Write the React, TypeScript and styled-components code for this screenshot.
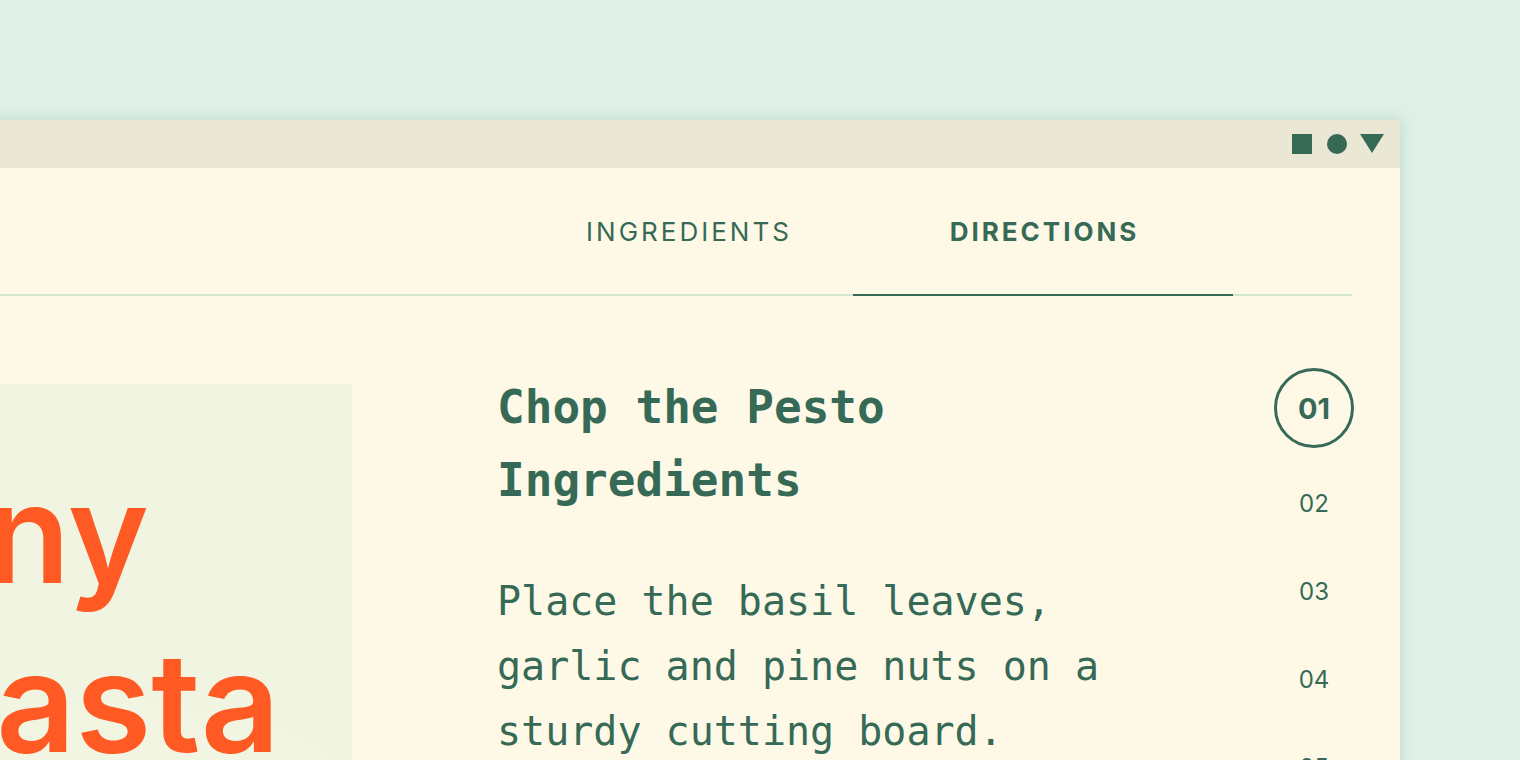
import React from "react";
import styled, { createGlobalStyle } from "styled-components";

const GlobalStyle = createGlobalStyle`
  html, body { margin: 0; padding: 0; height: 100%; overflow: hidden; }
  body { background: #dff1e6; font-family: Inter, "Noto Sans", sans-serif; }
  * { box-sizing: border-box; }
`;

const green = "#366a57";

const Page = styled.div`
  height: 760px;
  overflow: hidden;
  padding: 120px 120px 0 0;
  display: flex;
`;

const Window = styled.div`
  flex: 1;
  margin-left: -480px;
  min-height: 820px;
  background: #fef9e6;
  box-shadow: 0 0 14px rgba(60, 110, 90, 0.2);
  display: flex;
  flex-direction: column;
`;

const TitleBar = styled.div`
  height: 48px;
  flex-shrink: 0;
  background: #eae8d5;
  display: flex;
  align-items: center;
  justify-content: flex-end;
  gap: 11px;
  padding-right: 16px;
`;

const Content = styled.div`
  padding: 0 48px;
  display: flex;
  flex-direction: column;
`;

const TabBar = styled.div`
  height: 128px;
  display: flex;
  justify-content: flex-end;
  padding-right: 119px;
  border-bottom: 2px solid #d5e8cf;
`;

const Tab = styled.div<{ $w: number; $active?: boolean }>`
  width: ${(p) => p.$w}px;
  display: flex;
  align-items: center;
  justify-content: center;
  font-size: 26px;
  letter-spacing: 3px;
  text-indent: 3px;
  text-transform: uppercase;
  color: ${green};
  font-weight: ${(p) => (p.$active ? 700 : 400)};
  border-bottom: 2px solid ${(p) => (p.$active ? green : "transparent")};
  margin-bottom: -2px;
`;

const Main = styled.div`
  display: flex;
  align-items: flex-start;
  padding-top: 72px;
`;

const HeroBox = styled.div`
  width: 784px;
  height: 620px;
  flex-shrink: 0;
  margin-top: 16px;
  margin-right: 145px;
  background: radial-gradient(ellipse 420px 180px at 560px 420px, #f2f6e3 0%, #f0f4e0 70%), #f0f4e0;
  display: flex;
  flex-direction: column;
  align-items: flex-end;
  padding: 64px 72px 0 0;
`;

const HeroLine = styled.div<{ $trail: number }>`
  font-size: 138px;
  line-height: 169px;
  font-weight: 600;
  color: #ff5a24;
  white-space: nowrap;
  padding-right: ${(p) => p.$trail}px;
`;

const TextCol = styled.div`
  width: 640px;
  flex-shrink: 0;
  color: ${green};
  font-family: "DejaVu Sans Mono", "Liberation Mono", monospace;
`;

const Heading = styled.h2`
  margin: 3px 0 0;
  font-size: 46px;
  line-height: 73px;
  font-weight: 700;
`;

const Body = styled.p`
  margin: 52px 0 0;
  font-size: 40px;
  line-height: 65px;
  font-weight: 400;
`;

const Steps = styled.div`
  margin-left: auto;
  margin-right: -2px;
  width: 80px;
  display: flex;
  flex-direction: column;
  align-items: center;
  color: ${green};
`;

const StepCurrent = styled.div`
  width: 80px;
  height: 80px;
  border: 3px solid ${green};
  border-radius: 50%;
  display: flex;
  align-items: center;
  justify-content: center;
  font-size: 29px;
  font-weight: 700;
  margin-bottom: 11px;
`;

const Step = styled.div`
  height: 88px;
  display: flex;
  align-items: center;
  justify-content: center;
  font-size: 24px;
  font-weight: 400;
`;

const Icon = styled.svg`
  display: block;
  fill: ${green};
`;

export default function App() {
  return (
    <>
      <GlobalStyle />
      <Page>
        <Window>
          <TitleBar>
            <Icon width="24" height="24" viewBox="0 0 24 24">
              <rect x="2" y="2" width="20" height="20" />
            </Icon>
            <Icon width="24" height="24" viewBox="0 0 24 24">
              <circle cx="12" cy="12" r="10" />
            </Icon>
            <Icon width="24" height="24" viewBox="0 0 24 24">
              <polygon points="0,2 24,2 12,21" />
            </Icon>
          </TitleBar>
          <Content>
            <TabBar>
              <Tab $w={331}>Ingredients</Tab>
              <Tab $w={380} $active>
                Directions
              </Tab>
            </TabBar>
            <Main>
              <HeroBox>
                <HeroLine $trail={131}>Lemony</HeroLine>
                <HeroLine $trail={0}>Pesto Pasta</HeroLine>
              </HeroBox>
              <TextCol>
                <Heading>Chop the Pesto Ingredients</Heading>
                <Body>Place the basil leaves, garlic and pine nuts on a sturdy cutting board.</Body>
              </TextCol>
              <Steps>
                <StepCurrent>01</StepCurrent>
                <Step>02</Step>
                <Step>03</Step>
                <Step>04</Step>
                <Step>05</Step>
              </Steps>
            </Main>
          </Content>
        </Window>
      </Page>
    </>
  );
}
